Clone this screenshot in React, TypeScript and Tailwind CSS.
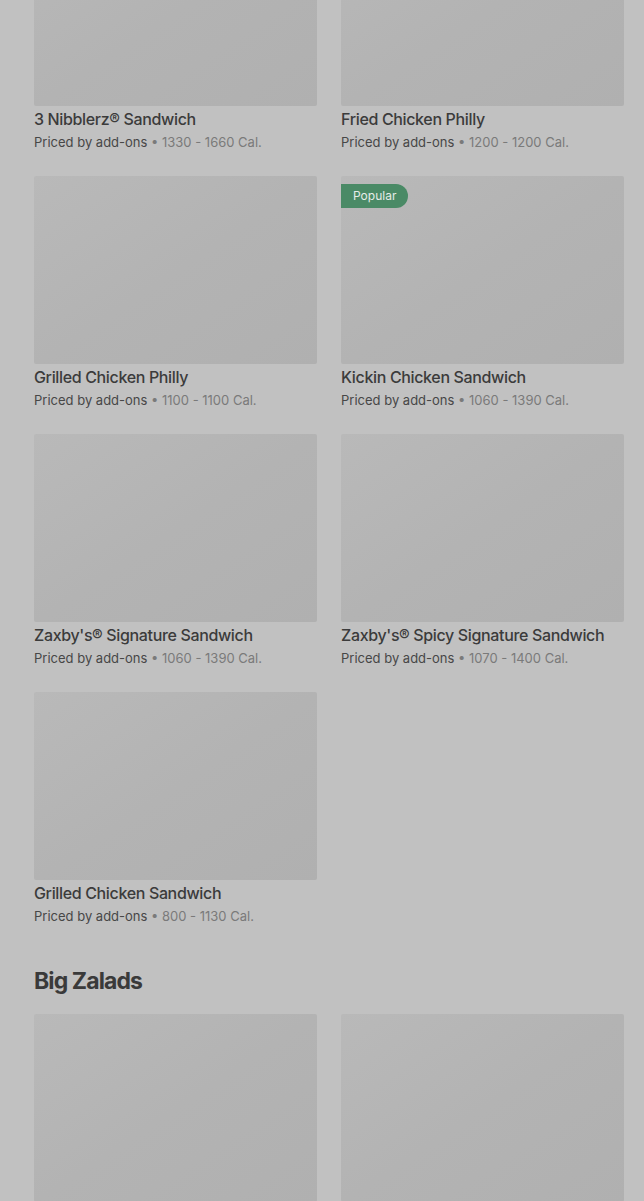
import React from "react";

type Item = { name: string; cal: string; popular?: boolean };

const rows: Item[][] = [
  [
    { name: "3 Nibblerz® Sandwich", cal: "1330 - 1660 Cal." },
    { name: "Fried Chicken Philly", cal: "1200 - 1200 Cal." },
  ],
  [
    { name: "Grilled Chicken Philly", cal: "1100 - 1100 Cal." },
    { name: "Kickin Chicken Sandwich", cal: "1060 - 1390 Cal.", popular: true },
  ],
  [
    { name: "Zaxby's® Signature Sandwich", cal: "1060 - 1390 Cal." },
    { name: "Zaxby's® Spicy Signature Sandwich", cal: "1070 - 1400 Cal." },
  ],
  [{ name: "Grilled Chicken Sandwich", cal: "800 - 1130 Cal." }],
];

function Card({ item }: { item: Item }) {
  return (
    <div className="flex flex-col">
      <div className="relative h-[188px] rounded-[2px] bg-gradient-to-br from-[#b9b9b9] via-[#b3b3b3] to-[#b0b0b0]">
        {item.popular && (
          <div className="absolute left-0 top-2 flex h-6 items-center rounded-r-full bg-[#4a8a66] pl-3 pr-3 text-[12px] text-[#e6ece8]">
            Popular
          </div>
        )}
      </div>
      <div className="mt-[1px] h-6 text-[16px] font-medium leading-6 tracking-[-0.35px] text-[#3b3b3b] whitespace-nowrap">
        {item.name}
      </div>
      <div className="mt-[1px] h-5 text-[13px] leading-5 whitespace-nowrap">
        <span className="text-[#474747]">Priced by add-ons</span>
        <span className="text-[#7a7a7a]"> • {item.cal}</span>
      </div>
    </div>
  );
}

export default function App() {
  return (
    <div
      className="min-h-[1201px] w-[644px] overflow-hidden bg-[#c1c1c1]"
      style={{ fontFamily: "Inter, 'Noto Sans', sans-serif" }}
    >
      <div className="-mt-[82px] pl-[34px] pr-[20px]">
        <div className="grid grid-cols-2 gap-x-6 gap-y-6">
          {rows.flat().map((it, i) => (
            <Card key={i} item={it} />
          ))}
        </div>
        <h2 className="mt-[39px] mb-[17px] h-8 text-[23px] font-bold leading-8 tracking-[-0.9px] text-[#3a3a3a]">
          Big Zalads
        </h2>
        <div className="grid grid-cols-2 gap-x-6">
          <div className="h-[188px] rounded-[2px] bg-gradient-to-br from-[#b9b9b9] via-[#b3b3b3] to-[#b0b0b0]" />
          <div className="h-[188px] rounded-[2px] bg-gradient-to-br from-[#b9b9b9] via-[#b3b3b3] to-[#b0b0b0]" />
        </div>
      </div>
    </div>
  );
}
